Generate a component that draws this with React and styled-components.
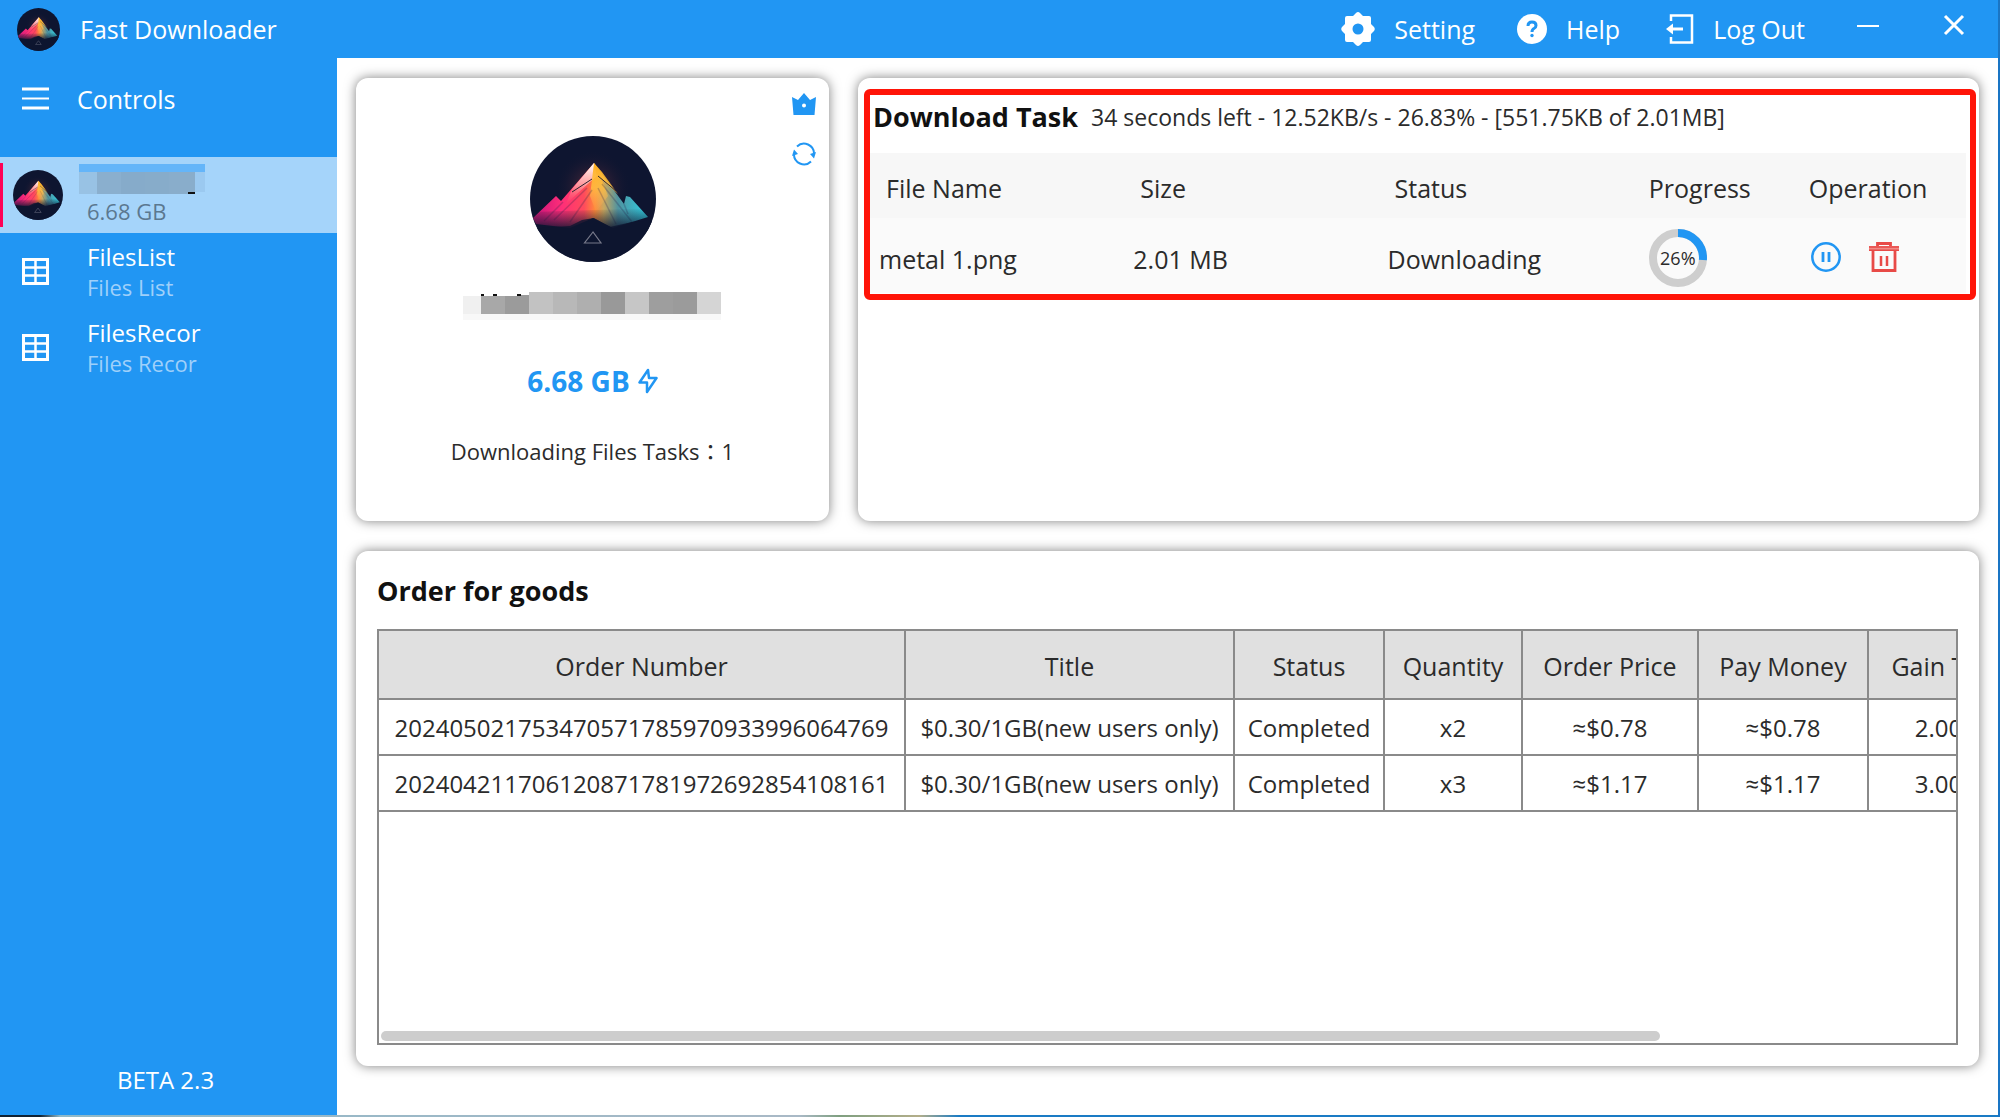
import React from 'react'
import styled, { createGlobalStyle } from 'styled-components'

const GlobalStyle = createGlobalStyle`
  * {
    box-sizing: border-box;
  }
  body {
    margin: 0;
    background: #fff;
    color: #2b2b2b;
    font-family: 'Open Sans', 'Noto Sans', 'Noto Sans CJK TC', sans-serif;
    font-size: 25px;
    line-height: 32px;
  }
  button {
    border: 0;
    padding: 0;
    background: none;
    color: inherit;
    font: inherit;
    cursor: pointer;
  }
  svg {
    display: block;
    flex: none;
  }
`

const Window = styled.div`
  display: flex;
  flex-direction: column;
  min-height: 100vh;
  border-right: 2px solid #1a75c4;
`

const TitleBar = styled.header`
  display: flex;
  align-items: center;
  height: 58px;
  padding: 0 32px 0 17px;
  background: #2196f3;
  color: #fff;
`

const AppName = styled.span`
  margin-left: 20px;
  margin-right: auto;
`

const BarButton = styled.button`
  display: flex;
  align-items: center;
  gap: 19px;
  margin-right: ${(p) => p.$after || 42}px;
`

const Body = styled.div`
  display: flex;
  flex: 1;
`

const Sidebar = styled.nav`
  display: flex;
  flex-direction: column;
  width: 337px;
  flex: none;
  background: #2196f3;
  color: #fff;
`

const MenuToggle = styled.button`
  display: flex;
  align-items: center;
  gap: 28px;
  height: 82px;
  margin-bottom: 17px;
  padding: 0 22px;
`

const NavLink = styled.a`
  display: flex;
  align-items: center;
  gap: ${(p) => (p.$active ? 25 : 38)}px;
  height: 76px;
  padding-left: ${(p) => (p.$active ? 0 : 22)}px;
  background: ${(p) => (p.$active ? '#a5d4fa' : 'transparent')};
  color: inherit;
  font-size: 24px;
  text-decoration: none;
`

const ActiveMark = styled.span`
  width: 3px;
  height: 64px;
  margin-right: -15px;
  background: #ff0055;
`

const NavText = styled.span`
  display: flex;
  flex-direction: column;
  padding-top: 2px;
  line-height: 30px;
`

const NavSub = styled.small`
  font-size: 22px;
  color: ${(p) => (p.$dark ? '#5b7890' : '#9fd0fa')};
`

const Account = styled.span`
  display: flex;
  flex-direction: column;
  margin-left: -9px;
  line-height: 32px;

  small {
    padding-left: 8px;
  }
`

const Version = styled.footer`
  margin-top: auto;
  padding: 0 78px 19px 72px;
  font-size: 24px;
  text-align: center;
`

const Main = styled.main`
  flex: 1;
  min-width: 0;
  display: flex;
  flex-direction: column;
  gap: 30px;
  padding: 20px 19px 49px 19px;
`

const TopRow = styled.div`
  display: flex;
  gap: 29px;
  height: 443px;
`

const Card = styled.section`
  background: #fff;
  border-radius: 12px;
  box-shadow: 0 0 12px rgba(0, 0, 0, 0.5);
`

const ProfileCard = styled(Card)`
  display: grid;
  grid-template-columns: 50px 1fr 50px;
  width: 473px;
  flex: none;
`

const Profile = styled.div`
  grid-column: 2;
  display: flex;
  flex-direction: column;
  align-items: center;
  padding-top: 58px;
`

const Quota = styled.strong`
  display: flex;
  align-items: center;
  gap: 8px;
  margin: 51px 0 38px;
  color: #2196f3;
  font-size: 28px;
`

const TaskCount = styled.span`
  font-size: 22px;
`

const CardActions = styled.div`
  display: flex;
  flex-direction: column;
  align-items: center;
  gap: 26px;
  padding: 14px 0 0;
`

const TaskCard = styled(Card)`
  flex: 1;
  min-width: 0;
  padding: 11px 3px 0 6px;
`

const Highlight = styled.div`
  border: 6px solid #ff1408;
  border-radius: 6px;
  padding: 0 4px 1px 0;
`

const TaskHead = styled.div`
  display: flex;
  align-items: center;
  gap: 13px;
  height: 58px;
  padding: 0 0 14px 3px;
`

const TaskInfo = styled.span`
  font-size: 23px;
`

const Heading = styled.h2`
  margin: 0;
  font-size: 27px;
  font-weight: 700;
  color: #111;
`

const TaskTable = styled.table`
  width: 100%;
  table-layout: fixed;
  border-collapse: collapse;
  text-align: left;

  th {
    height: 65px;
    padding: 4px 0 0 16px;
    background: #f7f7f7;
    font-weight: 400;
  }
  td {
    height: 75px;
    padding: 6px 0 0 9px;
    background: #fafafa;
  }
`

const Ring = styled.div`
  position: relative;
  width: 58px;
  height: 58px;
  margin: 0 0 2px 7px;

  span {
    position: absolute;
    inset: 0;
    display: flex;
    align-items: center;
    justify-content: center;
    font-size: 18px;
  }
`

const Operations = styled.div`
  display: flex;
  gap: 28px;
  padding: 0 0 4px 9px;
`

const OrderCard = styled(Card)`
  flex: 1;
  display: flex;
  flex-direction: column;
  padding: 24px 21px 21px;
`

const OrderBox = styled.div`
  flex: 1;
  display: flex;
  flex-direction: column;
  justify-content: space-between;
  margin-top: 22px;
  overflow: hidden;
  border: 2px solid #8a8a8a;
`

const OrderTable = styled.table`
  width: 1670px;
  margin: -2px 0 0 -2px;
  table-layout: fixed;
  border-collapse: collapse;
  text-align: center;

  th,
  td {
    height: 56px;
    padding: 2px 0 0;
    border: 2px solid #8a8a8a;
    font-size: 24px;
    white-space: nowrap;
  }
  th {
    height: 69px;
    background: #e0e0e0;
    font-size: 25px;
    font-weight: 400;
  }
`

const ScrollTrack = styled.div`
  padding: 0 2px 2px;
`

const ScrollThumb = styled.div`
  width: 81.3%;
  height: 10px;
  border-radius: 5px;
  background: #cdcdcd;
`

const DesktopEdge = styled.div`
  height: 2px;
  background: linear-gradient(90deg, #123 2%, #8fb8c8 3%, #a9b9c6 40%, #7f9f80 42%, #b3ae8a 46%, #1a7bc4 48%);
`

const Mosaic = styled.div`
  display: flex;
  align-items: flex-end;
  margin-top: 30px;
  margin-right: 2px;
  box-shadow: 0 6px 0 #f8f8f8;
`

const MosaicCell = styled.span`
  width: ${(p) => p.$w || 24}px;
  height: ${(p) => p.$h || 22}px;
  background: ${(p) => p.$c};
  border-top: ${(p) => (p.$speck === 'top' ? '2px solid #111' : 0)};
  border-bottom: ${(p) => (p.$speck === 'bottom' ? '2px solid #111' : 0)};
`

const NameMask = styled.span`
  display: flex;
  width: 126px;
  height: 31px;
  border-top: 8px solid #64b5f9;
`

const profileCells = [
  ['#f0f0f0', 18, 18],
  ['#a8a8a8', 3, 20, 'top'],
  ['#a8a8a8', 9, 18],
  ['#a8a8a8', 4, 20, 'top'],
  ['#a8a8a8', 8, 18],
  ['#9b9b9b', 12, 18],
  ['#9b9b9b', 4, 20, 'top'],
  ['#9b9b9b', 8, 19],
  ['#c2c2c2'],
  ['#b8b8b8'],
  ['#afafaf'],
  ['#999999'],
  ['#c6c6c6'],
  ['#9e9e9e'],
  ['#9b9b9b'],
  ['#d5d5d5'],
]

const nameCells = [
  ['#98c2e4', 18],
  ['#8aafce', 24],
  ['#86abca', 24],
  ['#87acca', 24],
  ['#89adcb', 19],
  ['#89adcb', 7, 22, 'bottom'],
  ['#9bc9f0', 10, 20],
]

const navItems = [
  { name: 'FilesList', sub: 'Files List' },
  { name: 'FilesRecor', sub: 'Files Recor' },
]

const taskColumns = [
  { name: 'File Name', width: '23.2%' },
  { name: 'Size', width: '23.2%' },
  { name: 'Status', width: '23.2%' },
  { name: 'Progress', width: '14.6%' },
  { name: 'Operation', width: '15.8%' },
]

const orderColumns = [
  { name: 'Order Number', width: 527 },
  { name: 'Title', width: 329 },
  { name: 'Status', width: 150 },
  { name: 'Quantity', width: 138 },
  { name: 'Order Price', width: 176 },
  { name: 'Pay Money', width: 170 },
  { name: 'Gain Traffic', width: 180 },
]

const orders = [
  ['202405021753470571785970933996064769', '$0.30/1GB(new users only)', 'Completed', 'x2', '≈$0.78', '≈$0.78', '2.00 GB'],
  ['202404211706120871781972692854108161', '$0.30/1GB(new users only)', 'Completed', 'x3', '≈$1.17', '≈$1.17', '3.00 GB'],
]

const Avatar = ({ size, id }) => (
  <svg width={size} height={size} viewBox='0 0 126 126' aria-hidden='true'>
    <defs>
      <clipPath id={`${id}-clip`}>
        <circle cx='63' cy='63' r='63' />
      </clipPath>
      <linearGradient id={`${id}-body`} gradientUnits='userSpaceOnUse' x1='12' y1='80' x2='112' y2='80'>
        <stop offset='0' stopColor='#d81b7a' />
        <stop offset='0.2' stopColor='#ff2e78' />
        <stop offset='0.42' stopColor='#ff4a5c' />
        <stop offset='0.53' stopColor='#ff8a3a' />
        <stop offset='0.62' stopColor='#c8a860' />
        <stop offset='0.76' stopColor='#4f93a0' />
        <stop offset='1' stopColor='#35c4d6' />
      </linearGradient>
      <linearGradient id={`${id}-tip`} gradientUnits='userSpaceOnUse' x1='50' y1='27' x2='50' y2='70'>
        <stop offset='0' stopColor='#fff' />
        <stop offset='0.5' stopColor='#ffb0b0' stopOpacity='0.8' />
        <stop offset='1' stopColor='#ff5060' stopOpacity='0' />
      </linearGradient>
      <linearGradient id={`${id}-sun`} gradientUnits='userSpaceOnUse' x1='66' y1='27' x2='70' y2='76'>
        <stop offset='0' stopColor='#ffb020' />
        <stop offset='0.5' stopColor='#ffc040' stopOpacity='0.8' />
        <stop offset='1' stopColor='#ffb060' stopOpacity='0' />
      </linearGradient>
      <linearGradient id={`${id}-fade`} x1='0' y1='0' x2='0' y2='1'>
        <stop offset='0' stopColor='#0e1530' stopOpacity='0' />
        <stop offset='1' stopColor='#0e1530' />
      </linearGradient>
      <radialGradient id={`${id}-glow`}>
        <stop offset='0' stopColor='#8a3a40' stopOpacity='0.7' />
        <stop offset='1' stopColor='#0e1530' stopOpacity='0' />
      </radialGradient>
    </defs>
    <g clipPath={`url(#${id}-clip)`}>
      <rect width='126' height='126' fill='#0e1530' />
      <circle cx='63' cy='52' r='38' fill={`url(#${id}-glow)`} />
      <path d='M3 82 L26 60 L31 65 L64 27 L94 68 L96 60 L100 61 L118 81 L102 86 L83 92 L63 82 L40 92 L6 88 Z' fill={`url(#${id}-body)`} />
      <path d='M64 27 L42 53 L36 68 L60 46 L67 40 Z' fill={`url(#${id}-tip)`} />
      <path d='M64 27 L72 36 L88 58 L72 44 L78 60 L66 76 L60 60 Z' fill={`url(#${id}-sun)`} />
      <path d='M68 40 L86 55 M62 43 L42 56' stroke='#2c2430' strokeWidth='1' fill='none' />
      <path d='M72 48 L102 86 M68 52 L86 88 M57 52 L24 84 M62 54 L40 86 M33 66 L14 85 M94 68 L98 78' stroke='#29204a' strokeOpacity='0.25' strokeWidth='1.5' fill='none' />
      <path d='M0 76 L126 72 L126 96 L0 96 Z' fill={`url(#${id}-fade)`} />
      <path d='M0 93 L24 91 L40 90 L52 84 L64 82 L80 91 L102 86 L126 84 V126 H0 Z' fill='#0e1530' fillOpacity='0.8' />
      <path d='M63 96 L54.500 107 H71 Z' fill='none' stroke='#77798a' strokeWidth='1.200' />
    </g>
  </svg>
)

const GearIcon = () => (
  <svg width='34' height='34' viewBox='0 0 34 34' fill='#fff' aria-hidden='true'>
    <path
      fillRule='evenodd'
      d='M15 1 Q17-1 19 1 L22 4 H28 Q30 4 30 6 V12 L33 15 Q34.500 17 33 19 L30 22 V28 Q30 30 28 30 H22 L19 33 Q17 35 15 33 L12 30 H6 Q4 30 4 28 V22 L1 19 Q-.5 17 1 15 L4 12 V6 Q4 4 6 4 H12 Z M17 11.500 A5.500 5.500 0 1 0 17 22.500 A5.500 5.500 0 1 0 17 11.500 Z'
    />
  </svg>
)

const HelpIcon = () => (
  <svg width='30' height='30' viewBox='0 0 30 30' aria-hidden='true'>
    <circle cx='15' cy='15' r='15' fill='#fff' />
    <path d='M11 12 Q11 8 15 8 Q19 8 19 11.500 Q19 13.500 17 14.500 Q15 15.500 15 18' fill='none' stroke='#2196f3' strokeWidth='3' />
    <circle cx='15' cy='21.500' r='1.700' fill='#2196f3' />
  </svg>
)

const LogOutIcon = () => (
  <svg width='28' height='30' viewBox='0 0 28 30' fill='none' stroke='#fff' strokeWidth='2.500' aria-hidden='true'>
    <path d='M5 7 V1.500 H26 V28.500 H5 V23' />
    <path d='M5 15 H17' strokeWidth='3' />
    <path d='M0 15 L7 9.500 V20.500 Z' fill='#fff' stroke='none' />
  </svg>
)

const GridIcon = () => (
  <svg width='27' height='27' viewBox='0 0 27 27' fill='none' stroke='#fff' strokeWidth='3' aria-hidden='true'>
    <rect x='1.500' y='1.500' width='24' height='24' />
    <path d='M13.500 1 V26 M1 9.500 H26 M1 17.500 H26' strokeWidth='2.500' />
  </svg>
)

const CrownIcon = () => (
  <svg width='26' height='24' viewBox='0 0 26 24' aria-hidden='true'>
    <path fillRule='evenodd' fill='#2196f3' d='M1 5 L7 8 L13 1 L19 8 L25 5 L23.500 23 H2.500 Z M13 11.500 A2 2 0 1 0 13 15.500 A2 2 0 1 0 13 11.500 Z' />
  </svg>
)

const RefreshIcon = () => (
  <svg width='24' height='24' viewBox='0 0 24 24' fill='none' stroke='#2196f3' strokeWidth='2' aria-hidden='true'>
    <path d='M5 4.500 A10 10 0 0 1 22 12' />
    <path d='M19 19.500 A10 10 0 0 1 2 12' />
    <path d='M18 12 L22 16.500 L24 10 Z M6 12 L2 7.500 L0 14 Z' fill='#2196f3' stroke='none' />
  </svg>
)

const BoltIcon = () => (
  <svg width='20' height='26' viewBox='0 0 20 26' fill='none' stroke='#2196f3' strokeWidth='2.500' strokeLinejoin='round' aria-hidden='true'>
    <path d='M10 2 L1.500 14.500 H9 V24 L18.500 10 H11 Z' />
  </svg>
)

const App = () => (
  <>
    <GlobalStyle />
    <Window>
      <TitleBar>
        <Avatar size={43} id='brand' />
        <AppName>Fast Downloader</AppName>
        <BarButton>
          <GearIcon />
          Setting
        </BarButton>
        <BarButton $after={46}>
          <HelpIcon />
          Help
        </BarButton>
        <BarButton $after={52}>
          <LogOutIcon />
          Log Out
        </BarButton>
        <BarButton $after={64} aria-label='Minimize'>
          <svg width='22' height='22' viewBox='0 0 22 22' stroke='#fff' strokeWidth='2'>
            <path d='M0 8 H22' />
          </svg>
        </BarButton>
        <BarButton $after={1} aria-label='Close'>
          <svg width='22' height='30' viewBox='0 0 22 30' stroke='#fff' strokeWidth='3'>
            <path d='M2 2 L20 20 M20 2 L2 20' />
          </svg>
        </BarButton>
      </TitleBar>
      <Body>
        <Sidebar aria-label='Controls'>
          <MenuToggle>
            <svg width='27' height='24' viewBox='0 0 27 24' stroke='#fff' strokeWidth='3' aria-hidden='true'>
              <path d='M0 2 H27 M0 21 H27' />
              <path d='M0 11.500 H27' strokeWidth='2' />
            </svg>
            Controls
          </MenuToggle>
          <NavLink href='#account' $active>
            <ActiveMark />
            <Avatar size={50} id='account' />
            <Account>
              <NameMask>
                {nameCells.map(([color, width, height, speck], i) => (
                  <MosaicCell key={i} $c={color} $w={width} $h={height} $speck={speck} />
                ))}
              </NameMask>
              <NavSub $dark>6.68 GB</NavSub>
            </Account>
          </NavLink>
          {navItems.map((item) => (
            <NavLink key={item.name} href={`#${item.name}`}>
              <GridIcon />
              <NavText>
                {item.name}
                <NavSub>{item.sub}</NavSub>
              </NavText>
            </NavLink>
          ))}
          <Version>BETA 2.3</Version>
        </Sidebar>
        <Main>
          <TopRow>
            <ProfileCard>
              <Profile>
                <Avatar size={126} id='profile' />
                <Mosaic>
                  {profileCells.map(([color, width, height, speck], i) => (
                    <MosaicCell key={i} $c={color} $w={width} $h={height} $speck={speck} />
                  ))}
                </Mosaic>
                <Quota>
                  6.68 GB
                  <BoltIcon />
                </Quota>
                <TaskCount>Downloading Files Tasks：1</TaskCount>
              </Profile>
              <CardActions>
                <button aria-label='Upgrade'>
                  <CrownIcon />
                </button>
                <button aria-label='Refresh'>
                  <RefreshIcon />
                </button>
              </CardActions>
            </ProfileCard>
            <TaskCard>
              <Highlight>
                <TaskHead>
                  <Heading>Download Task</Heading>
                  <TaskInfo>34 seconds left - 12.52KB/s - 26.83% - [551.75KB of 2.01MB]</TaskInfo>
                </TaskHead>
                <TaskTable>
                  <colgroup>
                    {taskColumns.map((col) => (
                      <col key={col.name} width={col.width} />
                    ))}
                  </colgroup>
                  <thead>
                    <tr>
                      {taskColumns.map((col) => (
                        <th key={col.name}>{col.name}</th>
                      ))}
                    </tr>
                  </thead>
                  <tbody>
                    <tr>
                      <td>metal 1.png</td>
                      <td>2.01 MB</td>
                      <td>Downloading</td>
                      <td>
                        <Ring>
                          <svg width='58' height='58' viewBox='0 0 58 58' fill='none' strokeWidth='8' aria-hidden='true'>
                            <circle cx='29' cy='29' r='25' stroke='#cecece' />
                            <path d='M29 4 A25 25 0 0 1 53.900 31' stroke='#2196f3' />
                          </svg>
                          <span>26%</span>
                        </Ring>
                      </td>
                      <td>
                        <Operations>
                          <button aria-label='Pause'>
                            <svg width='30' height='30' viewBox='0 0 30 30' fill='none' stroke='#2196f3'>
                              <circle cx='15' cy='15' r='13.700' strokeWidth='2.500' />
                              <path d='M12 10 V20 M18 10 V20' strokeWidth='2.800' />
                            </svg>
                          </button>
                          <button aria-label='Delete'>
                            <svg width='30' height='30' viewBox='0 0 30 30' fill='none' stroke='#e84a47'>
                              <path d='M4 9 V28.500 H26 V9' strokeWidth='2.800' />
                              <path d='M8.500 5 V1.500 H21.500 V5' strokeWidth='2.800' />
                              <path d='M0 6.500 H30' stroke='#f08a86' strokeWidth='5' />
                              <path d='M0 8.300 H30 M0 5 H30' strokeWidth='1.500' />
                              <path d='M12 14 V24 M18 14 V24' strokeWidth='2.500' />
                            </svg>
                          </button>
                        </Operations>
                      </td>
                    </tr>
                  </tbody>
                </TaskTable>
              </Highlight>
            </TaskCard>
          </TopRow>
          <OrderCard>
            <Heading>Order for goods</Heading>
            <OrderBox>
              <OrderTable>
                <colgroup>
                  {orderColumns.map((col) => (
                    <col key={col.name} width={col.width} />
                  ))}
                </colgroup>
                <thead>
                  <tr>
                    {orderColumns.map((col) => (
                      <th key={col.name}>{col.name}</th>
                    ))}
                  </tr>
                </thead>
                <tbody>
                  {orders.map((order) => (
                    <tr key={order[0]}>
                      {order.map((value, i) => (
                        <td key={i}>{value}</td>
                      ))}
                    </tr>
                  ))}
                </tbody>
              </OrderTable>
              <ScrollTrack>
                <ScrollThumb />
              </ScrollTrack>
            </OrderBox>
          </OrderCard>
        </Main>
      </Body>
      <DesktopEdge />
    </Window>
  </>
)

export default App
